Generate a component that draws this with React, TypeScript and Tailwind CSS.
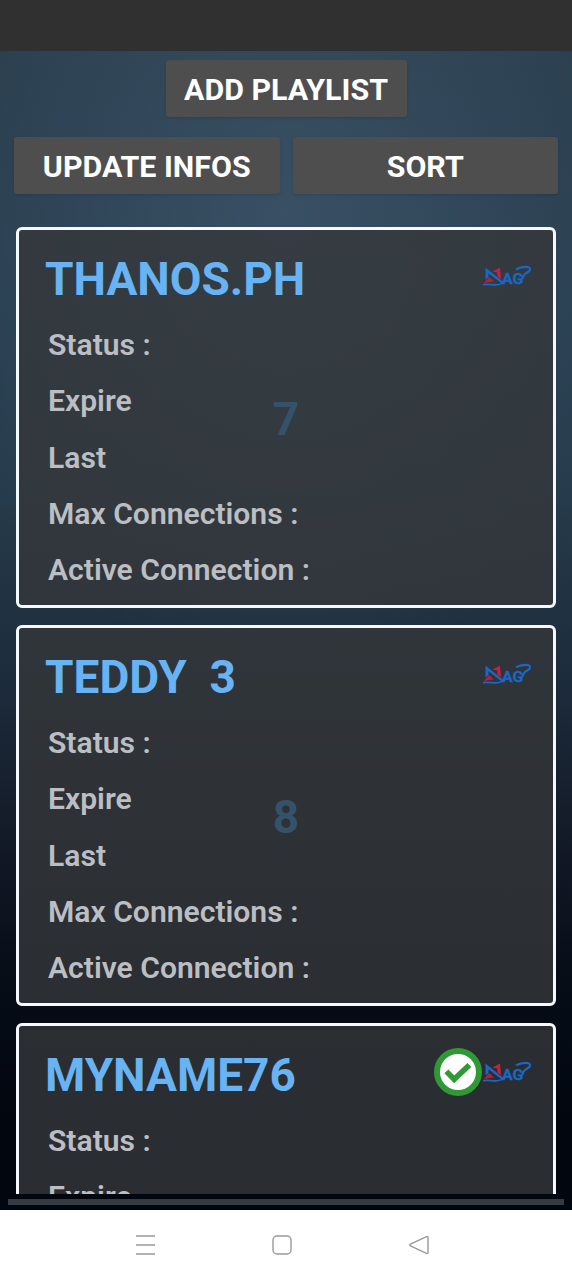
import { clsx } from 'clsx';

const playlists = [
  { name: 'THANOS.PH', index: 7, active: false },
  { name: 'TEDDY\u00a0 3', index: 8, active: false },
  { name: 'MYNAME76', index: 9, active: true },
];

const labels = ['Status :', 'Expire', 'Last', 'Max Connections :', 'Active Connection :'];

function MagLogo() {
  return (
    <svg className="h-[24px] w-[50px] shrink-0" viewBox="0 0 50 24" fill="none">
      <path d="M1.5 19.5 L7 13 L12 17.4 Q7 17.5 1.5 19.5 Z" fill="#b3203f" />
      <path d="M10.5 7.5 L18 3.5 L19 15 L15.5 12.5 L15.2 8.5 Z" fill="#c8203f" />
      <path d="M3.5 15.5 V3.5 L21.5 18 L20 19.8 L6.5 9.2 V13 Z" fill="#1c66c4" />
      <path d="M1 20.8 C8 18.8 15 24 23 17.6" stroke="#1c66c4" strokeWidth="1.6" />
      <text
        x="20"
        y="19.6"
        fill="#1c66c4"
        stroke="#1c66c4"
        strokeWidth="0.3"
        fontFamily="Roboto, sans-serif"
        fontWeight="700"
        fontSize="14.5"
        textLength="21.5"
        lengthAdjust="spacingAndGlyphs"
      >
        AG
      </text>
      <path d="M34 5.4 C39 2.4 49 1.4 48 5.6 C47 9.4 40.8 8.4 40.5 15" stroke="#1c66c4" strokeWidth="2.2" />
    </svg>
  );
}

function ActiveBadge() {
  return (
    <svg className="size-12 shrink-0" viewBox="0 0 48 48">
      <circle cx="24" cy="24" r="24" fill="#2f9a35" />
      <circle cx="24" cy="24" r="18" fill="#fff" />
      <path d="M12.4 23.4 L20.2 31.4 L35.4 17" fill="none" stroke="#2f9a35" strokeWidth="5.6" />
    </svg>
  );
}

function HeaderButton({ label, className }: { label: string; className?: string }) {
  return (
    <button
      className={clsx(
        'h-[57px] rounded-[3px] bg-[#4e4e4e] pt-[3px] text-[30.4px] leading-none font-bold text-white shadow-[0_1px_3px_rgba(0,0,0,0.15)]',
        className,
      )}
    >
      {label}
    </button>
  );
}

function PlaylistCard({ name, index, active }: { name: string; index: number; active: boolean }) {
  return (
    <div className="relative h-[381px] shrink-0 rounded-[6px] border-3 border-[#f5f8fc] bg-[#353739]/80 pl-[29px]">
      <div className="-ml-[3px] flex h-[93px] items-center justify-between pt-[4px] pr-[21px]">
        <h2 className="text-[46px] leading-none font-bold whitespace-pre text-[#67b3f3]">{name}</h2>
        <div className="flex items-center pb-[5px]">
          {active && <ActiveBadge />}
          <MagLogo />
        </div>
      </div>
      <ul>
        {labels.map((label) => (
          <li key={label} className="h-[56.3px] text-[30.1px] leading-[43px] font-semibold text-[#bbbec2]">
            {label}
          </li>
        ))}
      </ul>
      <span className="absolute inset-x-0 top-[166px] text-center text-[46px] leading-none font-bold text-[#34536a]">
        {index}
      </span>
    </div>
  );
}

export default function App() {
  return (
    <div className="flex h-[1280px] w-[572px] flex-col overflow-hidden font-['Roboto',sans-serif]">
      <div className="h-[51px] shrink-0 bg-[#303030]" />

      <main className="flex min-h-0 flex-1 flex-col bg-[radial-gradient(ellipse_65%_40%_at_50%_14%,rgba(72,98,122,0.5),transparent),linear-gradient(to_bottom,#293d4c_0%,#293f50_22%,#263b4b_38%,#1c2b3b_55%,#141b29_67%,#070d17_80%,#01060f_92%,#010710_100%)]">
        <header className="flex flex-col items-center px-[14px] pt-[9px]">
          <HeaderButton label="ADD PLAYLIST" className="w-[241px]" />
          <div className="mt-5 grid w-full grid-cols-2 gap-[13px]">
            <HeaderButton label="UPDATE INFOS" />
            <HeaderButton label="SORT" />
          </div>
        </header>

        <section className="mt-[33px] flex min-h-0 flex-1 flex-col gap-[17px] overflow-hidden px-4">
          {playlists.map((playlist) => (
            <PlaylistCard key={playlist.index} {...playlist} />
          ))}
        </section>

        <div className="mx-2 mt-[5px] mb-[5px] h-[6px] shrink-0 bg-[#343b43]" />
      </main>

      {/* System navigation */}
      <nav className="flex h-[70px] shrink-0 items-center justify-center bg-white">
        <svg className="h-[24px] w-[300px]" viewBox="0 0 300 24" fill="none" stroke="#999" strokeWidth="1.4">
          <path d="M0 3 H19 M0 12 H19 M0 21 H19" />
          <rect x="137" y="3" width="18" height="18" rx="4" />
          <path d="M290.5 3.6 Q292 3 292 4.5 V19.5 Q292 21 290.5 20.4 L274.5 13 Q273 12 274.5 11 Z" />
        </svg>
      </nav>
    </div>
  );
}
